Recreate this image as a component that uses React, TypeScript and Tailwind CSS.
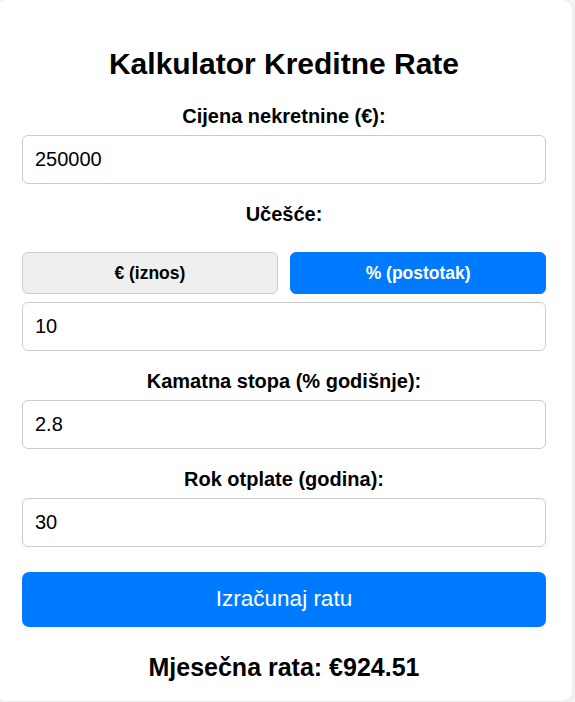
import { useState } from 'react'

const fieldCls =
  'block h-[49px] w-full rounded-[6px] border border-[#cccccc] bg-white pl-[12px] text-[20px] text-black outline-none'
const labelCls = 'mb-[7px] block text-center text-[20px] font-bold leading-[23px] text-black'

export default function App() {
  const [price, setPrice] = useState('250000')
  const [mode, setMode] = useState<'eur' | 'pct'>('pct')
  const [down, setDown] = useState('10')
  const [rate, setRate] = useState('2.8')
  const [years, setYears] = useState('30')
  const [result, setResult] = useState('924.51')

  const calc = () => {
    const p = parseFloat(price) || 0
    const d = parseFloat(down) || 0
    const loan = mode === 'pct' ? p - (p * d) / 100 : p - d
    const r = (parseFloat(rate) || 0) / 100 / 12
    const n = (parseFloat(years) || 0) * 12
    const m = r === 0 ? loan / n : (loan * r) / (1 - Math.pow(1 + r, -n))
    setResult(m.toFixed(2))
  }

  return (
    <div className="min-h-screen bg-[#f4f4f4] font-['Liberation_Sans',Arial,sans-serif]">
      <div className="-ml-1 w-[576px] rounded-[10px] bg-white px-[26px] pb-[19px] pt-[47px] shadow-[0_0_8px_rgba(0,0,0,0.05)]">
        <h2 className="mb-[24px] text-center text-[30px] font-bold leading-[34px] text-black">Kalkulator Kreditne Rate</h2>

        <label className={labelCls}>Cijena nekretnine (€):</label>
        <input className={fieldCls + ' mb-[19px]'} value={price} onChange={(e) => setPrice(e.target.value)} />

        <label className={labelCls}>Učešće:</label>
        {/* label margin collapses with this one, so the full gap goes here */}
        <div className="mb-[7.5px] mt-[26px] grid grid-cols-2 gap-[12.5px]">
          <button type="button" onClick={() => setMode('eur')}
            className={'h-[42px] rounded-[6px] border text-[17.5px] font-bold ' + (
              mode === 'eur' ? 'border-[#007bff] bg-[#007bff] text-white' : 'border-[#cccccc] bg-[#efefef] text-black'
            )}>
            € (iznos)
          </button>
          <button type="button" onClick={() => setMode('pct')}
            className={'h-[42px] rounded-[6px] border text-[17.5px] font-bold ' + (
              mode === 'pct' ? 'border-[#007bff] bg-[#007bff] text-white' : 'border-[#cccccc] bg-[#efefef] text-black'
            )}>
            % (postotak)
          </button>
        </div>
        <input className={fieldCls + ' mb-[19px]'} value={down} onChange={(e) => setDown(e.target.value)} />

        <label className={labelCls}>Kamatna stopa (% godišnje):</label>
        <input className={fieldCls + ' mb-[19px]'} value={rate} onChange={(e) => setRate(e.target.value)} />

        <label className={labelCls}>Rok otplate (godina):</label>
        <input className={fieldCls} value={years} onChange={(e) => setYears(e.target.value)} />

        <button type="button" onClick={calc}
          className="mt-[25px] block h-[55px] w-full rounded-[7px] bg-[#007bff] text-[22.5px] text-white">
          Izračunaj ratu
        </button>

        <h3 className="mt-[26.5px] text-center text-[25px] font-bold leading-[29px] text-black">Mjesečna rata: €{result}</h3>
      </div>
    </div>
  )
}
